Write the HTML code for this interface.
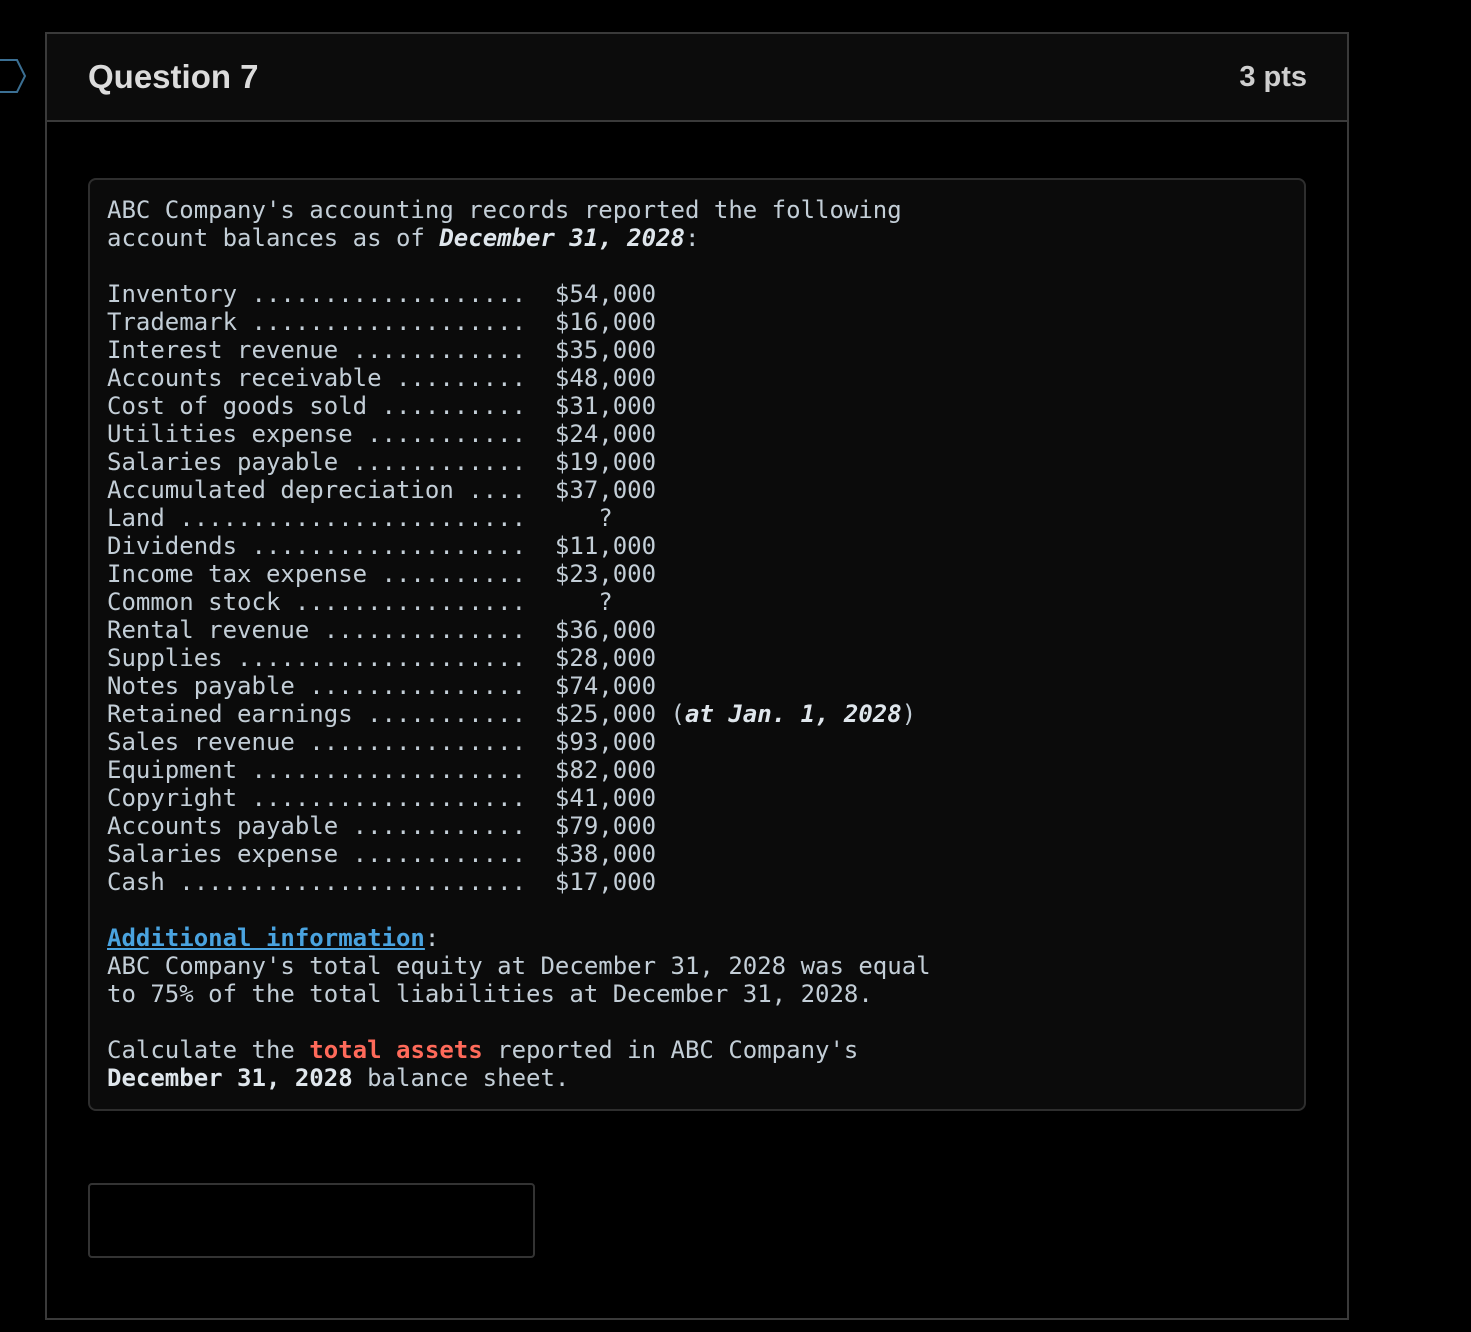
<!DOCTYPE html>
<html><head><meta charset="utf-8"><style>
html,body{margin:0;padding:0;background:#000;width:1471px;height:1332px;overflow:hidden;position:relative;font-family:"Liberation Sans",sans-serif}
.card{position:absolute;left:45px;top:32px;width:1300px;height:1284px;border:2px solid #3a3a3a;background:#000}
.hdr{height:86px;background:#0c0c0c;border-bottom:2px solid #3a3a3a;position:relative}
.hdr .t{position:absolute;left:41px;top:24px;font-size:33px;font-weight:bold;color:#dcdcdc}
.hdr .p{position:absolute;right:40px;top:27px;font-size:29px;font-weight:bold;color:#cfcfcf}
.box{position:absolute;left:41px;top:144px;width:1214px;height:929px;border:2px solid #2e2e2e;border-radius:8px;background:#0b0b0b}
pre{margin:0;position:absolute;left:17px;top:16px;font-family:"DejaVu Sans Mono","Liberation Mono",monospace;font-size:24px;line-height:28px;color:#c3ced7}
.bi{font-weight:bold;font-style:italic;color:#dfe6ec}
.b{font-weight:bold;color:#dfe6ec}
.r{font-weight:bold;color:#ff6a5a}
.l{font-weight:bold;color:#4aa3df;text-decoration:underline}
.inp{position:absolute;left:41px;top:1149px;width:443px;height:71px;border:2px solid #333;border-radius:4px;background:#000}
</style></head><body>
<svg style="position:absolute;left:0;top:58px" width="30" height="36" viewBox="0 0 30 36"><path d="M-5 2 H17 L25 18 L17 34 H-5" fill="none" stroke="#3b6f93" stroke-width="2"/></svg>
<div class="card">
<div class="hdr"><div class="t">Question 7</div><div class="p">3 pts</div></div>
<div class="box"><pre>ABC Company's accounting records reported the following
account balances as of <span class="bi">December 31, 2028</span>:

Inventory ...................  $54,000
Trademark ...................  $16,000
Interest revenue ............  $35,000
Accounts receivable .........  $48,000
Cost of goods sold ..........  $31,000
Utilities expense ...........  $24,000
Salaries payable ............  $19,000
Accumulated depreciation ....  $37,000
Land ........................     ?
Dividends ...................  $11,000
Income tax expense ..........  $23,000
Common stock ................     ?
Rental revenue ..............  $36,000
Supplies ....................  $28,000
Notes payable ...............  $74,000
Retained earnings ...........  $25,000 (<span class="bi">at Jan. 1, 2028</span>)
Sales revenue ...............  $93,000
Equipment ...................  $82,000
Copyright ...................  $41,000
Accounts payable ............  $79,000
Salaries expense ............  $38,000
Cash ........................  $17,000

<span class="l">Additional information</span>:
ABC Company's total equity at December 31, 2028 was equal
to 75% of the total liabilities at December 31, 2028.

Calculate the <span class="r">total assets</span> reported in ABC Company's
<span class="b">December 31, 2028</span> balance sheet.</pre></div>
<div class="inp"></div>
</div>
</body></html>
